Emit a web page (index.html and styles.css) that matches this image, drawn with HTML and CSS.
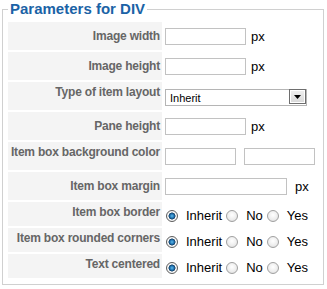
FILE: index.html
```html
<!DOCTYPE html>
<html lang="en">
<head>
    <meta charset="UTF-8">
    <title>Parameters for DIV</title>
    <link rel="stylesheet" href="styles.css">
</head>
<body>
    <fieldset class="params">
        <legend>Parameters for DIV</legend>
        <div class="param-list">
            <div class="param-row">
                <label class="param-key">Image width</label>
                <div class="param-value">
                    <input type="text" class="text-field">
                    <span class="unit">px</span>
                </div>
            </div>
            <div class="param-row">
                <label class="param-key">Image height</label>
                <div class="param-value">
                    <input type="text" class="text-field">
                    <span class="unit">px</span>
                </div>
            </div>
            <div class="param-row">
                <label class="param-key top">Type of item layout</label>
                <div class="param-value">
                    <div class="select-wrap">
                        <select class="select-field">
                            <option>Inherit</option>
                        </select>
                        <span class="select-arrow">
                            <svg width="7" height="4" viewBox="0 0 7 4"><polygon points="0,0 7,0 3.5,4" fill="#000"/></svg>
                        </span>
                    </div>
                </div>
            </div>
            <div class="param-row">
                <label class="param-key">Pane height</label>
                <div class="param-value">
                    <input type="text" class="text-field">
                    <span class="unit">px</span>
                </div>
            </div>
            <div class="param-row">
                <label class="param-key top">Item box background color</label>
                <div class="param-value">
                    <input type="text" class="text-field color-field">
                    <input type="text" class="text-field color-field">
                </div>
            </div>
            <div class="param-row">
                <label class="param-key">Item box margin</label>
                <div class="param-value">
                    <input type="text" class="text-field wide-field">
                    <span class="unit far">px</span>
                </div>
            </div>
            <div class="param-row short">
                <label class="param-key top">Item box border</label>
                <div class="param-value radios">
                    <input type="radio" class="radio" name="border" checked><span class="radio-text">Inherit</span>
                    <input type="radio" class="radio" name="border"><span class="radio-text">No</span>
                    <input type="radio" class="radio" name="border"><span class="radio-text">Yes</span>
                </div>
            </div>
            <div class="param-row short">
                <label class="param-key top">Item box rounded corners</label>
                <div class="param-value radios">
                    <input type="radio" class="radio" name="rounded" checked><span class="radio-text">Inherit</span>
                    <input type="radio" class="radio" name="rounded"><span class="radio-text">No</span>
                    <input type="radio" class="radio" name="rounded"><span class="radio-text">Yes</span>
                </div>
            </div>
            <div class="param-row short">
                <label class="param-key top">Text centered</label>
                <div class="param-value radios">
                    <input type="radio" class="radio" name="centered" checked><span class="radio-text">Inherit</span>
                    <input type="radio" class="radio" name="centered"><span class="radio-text">No</span>
                    <input type="radio" class="radio" name="centered"><span class="radio-text">Yes</span>
                </div>
            </div>
        </div>
    </fieldset>
</body>
</html>
```

FILE: styles.css
```css
* {
    margin: 0;
    padding: 0;
    box-sizing: border-box;
}

body {
    background: #fff;
    font-family: 'Liberation Sans', Arial, sans-serif;
    color: #000;
}

.params {
    margin: 0 3px 0 2px;
    padding: 3px 5px 6px;
    border: 1px solid #d0d0d0;
    min-width: 0;
}

.params legend {
    padding: 0 2px 2px;
    font-size: 15px;
    line-height: 17px;
    font-weight: bold;
    color: #1b63a6;
}

.param-list {
    display: flex;
    flex-direction: column;
    gap: 2px;
}

.param-row {
    display: flex;
    gap: 2px;
    height: 28px;
}

.param-row.short {
    height: 24px;
}

.param-key {
    width: 154px;
    flex-shrink: 0;
    background: #f4f4f4;
    display: flex;
    align-items: center;
    justify-content: flex-end;
    padding-right: 2px;
    font-size: 12px;
    line-height: 14px;
    font-weight: bold;
    letter-spacing: -0.2px;
    color: #666;
    white-space: nowrap;
}

.param-key.top {
    align-items: flex-start;
    padding-top: 3px;
}

.param-value {
    display: flex;
    align-items: center;
    padding-left: 1px;
}

.text-field {
    width: 81px;
    height: 17px;
    border: 1px solid #c2c2c2;
    background: #fff;
    font-size: 12px;
}

.color-field {
    width: 71px;
    margin-right: 8px;
}

.wide-field {
    width: 122px;
}

.unit {
    margin-left: 5px;
    font-size: 13px;
}

.unit.far {
    margin-left: 8px;
}

.select-wrap {
    position: relative;
    width: 142px;
    height: 17px;
}

.select-field {
    appearance: none;
    width: 100%;
    height: 100%;
    border: 1px solid #b5b5b5;
    border-radius: 0;
    background: #fff;
    padding-left: 4px;
    font-family: 'Liberation Sans', Arial, sans-serif;
    font-size: 11px;
    color: #000;
}

.select-arrow {
    position: absolute;
    top: 1px;
    right: 1px;
    width: 17px;
    height: 15px;
    border: 1px solid #6e6e6e;
    background: linear-gradient(#f0f0f0, #d8d8d8);
    box-shadow: inset 0 0 0 1px #fff;
    display: flex;
    align-items: flex-end;
    justify-content: center;
    padding-bottom: 4px;
    pointer-events: none;
}

.select-arrow svg {
    display: block;
}

.radios {
    padding-top: 3px;
}

.radio {
    appearance: none;
    width: 12px;
    height: 12px;
    margin-left: 1px;
    border: 1px solid #a0a0a0;
    border-radius: 50%;
    background: radial-gradient(circle at 50% 40%, #fff 0, #ececec 60%, #d2d2d2 100%);
}

.radio:checked {
    border-color: #5c5c5c;
    background: radial-gradient(circle at 50% 50%, #63bdea 0, #1f74b4 2px, #173f63 3.2px, #fafafa 3.8px, #e4e4e4 100%);
}

.radio-text {
    margin: 0 3px 0 8px;
    font-size: 13px;
}
```
